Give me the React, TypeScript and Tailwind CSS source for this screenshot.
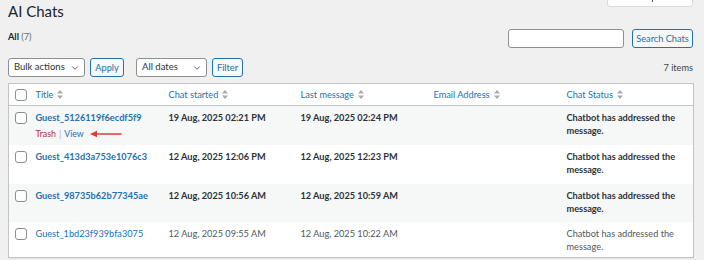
import React from 'react';
import { ChevronDown } from 'lucide-react';

type Chat = {
  title: string;
  started: string;
  last: string;
  email: string;
  status: string;
  unread: boolean;
};

const chats: Chat[] = [
  { title: 'Guest_5126119f6ecdf5f9', started: '19 Aug, 2025 02:21 PM', last: '19 Aug, 2025 02:24 PM', email: '', status: 'Chatbot has addressed the message.', unread: true },
  { title: 'Guest_413d3a753e1076c3', started: '12 Aug, 2025 12:06 PM', last: '12 Aug, 2025 12:23 PM', email: '', status: 'Chatbot has addressed the message.', unread: true },
  { title: 'Guest_98735b62b77345ae', started: '12 Aug, 2025 10:56 AM', last: '12 Aug, 2025 10:59 AM', email: '', status: 'Chatbot has addressed the message.', unread: true },
  { title: 'Guest_1bd23f939bfa3075', started: '12 Aug, 2025 09:55 AM', last: '12 Aug, 2025 10:22 AM', email: '', status: 'Chatbot has addressed the message.', unread: false },
];

const SortIcon = () => (
  <svg width="6" height="9" viewBox="0 0 6 9" className="ml-[4px] inline-block align-[-1px]">
    <path d="M3 0 L6 3.5 H0 Z" fill="#a7aaad" />
    <path d="M3 9 L6 5.5 H0 Z" fill="#a7aaad" />
  </svg>
);

const Checkbox = () => (
  <span className="block w-[12px] h-[12px] rounded-[3px] border border-[#8c8f94] bg-white" />
);

const Select = ({ label, width }: { label: string; width: string }) => (
  <div className={`${width} h-[19px] flex items-center justify-between pl-[5px] pr-[4px] bg-white border border-[#8c8f94] rounded-[3px] text-[9.5px] whitespace-nowrap text-[#2c3338]`}>
    <span>{label}</span>
    <ChevronDown size={10} strokeWidth={2.2} className="text-[#50575e]" />
  </div>
);

const Button = ({ label, width }: { label: string; width: string }) => (
  <div className={`${width} h-[19px] flex items-center justify-center bg-[#f6f7f7] border border-[#2271b1] rounded-[3px] text-[9.2px] whitespace-nowrap text-[#2271b1]`}>
    {label}
  </div>
);

export default function App() {
  return (
    <div
      className="w-[704px] h-[260px] overflow-hidden bg-[#f0f0f1] px-[8px] text-[#3c434a]"
      style={{ fontFamily: 'Lato, "Open Sans", sans-serif' }}
    >
      <div className="flex justify-between items-start h-[29px]">
        <h1 className="text-[15px] leading-[22px] text-[#1d2327] font-normal">AI Chats</h1>
        <div className="relative w-[86px] h-[7px] mr-[3px] bg-white border border-t-0 border-[#dcdcde] rounded-b-[3px]">
          <span className="absolute left-[44px] top-0 w-[1px] h-[2px] bg-[#50575e]" />
        </div>
      </div>

      <div className="flex justify-between items-start h-[19px]">
        <div className="text-[9.2px] leading-[14px] mt-[1px]">
          <span className="font-bold text-[#1d2327]">All</span>{' '}
          <span className="text-[#646970]">(7)</span>
        </div>
        <div className="flex items-center gap-[8px] mr-[3px]">
          <div className="w-[116px] h-[19px] bg-white border border-[#8c8f94] rounded-[3px]" />
          <Button label="Search Chats" width="w-[61px]" />
        </div>
      </div>

      <div className="flex justify-between items-center h-[19px] mt-[10px] mr-[3px]">
        <div className="flex items-center">
          <Select label="Bulk actions" width="w-[77px]" />
          <div className="ml-[5px]"><Button label="Apply" width="w-[34px]" /></div>
          <div className="ml-[12px]"><Select label="All dates" width="w-[71px]" /></div>
          <div className="ml-[5px]"><Button label="Filter" width="w-[31px]" /></div>
        </div>
        <span className="text-[9.2px] text-[#3c434a]">7 items</span>
      </div>

      <table className="mt-[6px] w-[685px] table-fixed border-collapse bg-white border border-[#c3c4c7] shadow-[0_1px_1px_rgba(0,0,0,0.04)] text-[9.2px]">
        <colgroup>
          <col className="w-[22px]" />
          <col className="w-[133px]" />
          <col className="w-[132px]" />
          <col className="w-[133px]" />
          <col className="w-[133px]" />
          <col className="w-[132px]" />
        </colgroup>
        <thead>
          <tr className="h-[22px] border-b border-[#c3c4c7] text-[#2271b1]">
            <th className="pl-[6px] align-middle"><Checkbox /></th>
            <th className="text-left font-normal pl-[5px]">Title<SortIcon /></th>
            <th className="text-left font-normal pl-[5px]">Chat started<SortIcon /></th>
            <th className="text-left font-normal pl-[5px]">Last message<SortIcon /></th>
            <th className="text-left font-normal pl-[5px]">Email Address<SortIcon /></th>
            <th className="text-left font-normal pl-[5px]">Chat Status<SortIcon /></th>
          </tr>
        </thead>
        <tbody>
          {chats.map((c, i) => {
            const weight = c.unread ? 'font-bold text-[#2c3338]' : 'font-normal text-[#50575e]';
            return (
              <tr key={c.title} className={`${i % 2 === 0 ? 'bg-[#f6f7f7]' : 'bg-white'} ${i === 3 ? 'h-[36px]' : i === 2 ? 'h-[38px]' : 'h-[39px]'}`}>
                <td className="pl-[6px] align-top pt-[6px]"><Checkbox /></td>
                <td className="align-top pl-[5px] pt-[5px] leading-[13px]">
                  <span className={`text-[#2271b1] ${c.unread ? 'font-bold' : 'font-normal'}`}>{c.title}</span>
                  {i === 0 && (
                    <div className="flex items-center mt-[3px] text-[8.8px]">
                      <span className="text-[#b32d2e]">Trash</span>
                      <span className="text-[#a7aaad] mx-[3px]">|</span>
                      <span className="text-[#2271b1]">View</span>
                      <svg width="32" height="8" viewBox="0 0 32 8" className="ml-[6px]">
                        <path d="M6 4 H31" stroke="#e5393a" strokeWidth="1.7" strokeLinecap="round" />
                        <path d="M0 4 L7 0.8 L7 7.2 Z" fill="#e5393a" />
                      </svg>
                    </div>
                  )}
                </td>
                <td className={`align-top pl-[5px] pt-[5px] leading-[13px] ${weight}`}>{c.started}</td>
                <td className={`align-top pl-[5px] pt-[5px] leading-[13px] ${weight}`}>{c.last}</td>
                <td className={`align-top pl-[5px] pt-[5px] leading-[13px] ${weight}`}>{c.email}</td>
                <td className={`align-top pl-[5px] pr-[8px] pt-[5px] leading-[13px] ${weight}`}>{c.status}</td>
              </tr>
            );
          })}
        </tbody>
      </table>
    </div>
  );
}
